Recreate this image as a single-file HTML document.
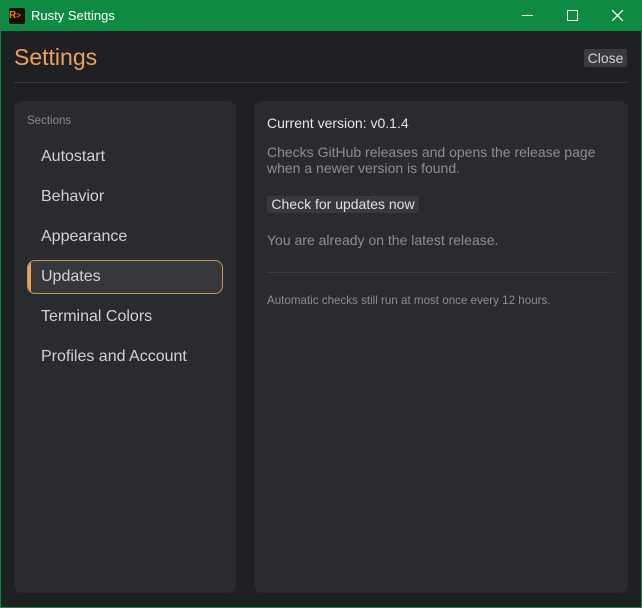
<html><head><style>
body{margin:0;width:642px;height:608px;background:#0f8a43;font-family:"Liberation Sans","DejaVu Sans",sans-serif;overflow:hidden;position:relative}
.t{position:absolute;white-space:nowrap}
#win{position:absolute;left:1px;top:31px;width:640px;height:576px;background:#1f2024}
.panel{position:absolute;background:#2a2b2f;border-radius:8px;top:101px;height:492px}
.nav{position:absolute;left:41px;font-size:16px;color:#d2d2d2}
</style></head><body>
<div class="t" style="left:9px;top:8px;width:16px;height:16px;background:#1a0e08;border-radius:2px;color:#f07a20;font-size:10px;font-weight:bold;line-height:16px">R<span style="font-size:8px">&gt;</span></div>
<div class="t" style="left:31px;top:8px;font-size:13px;color:#fff">Rusty Settings</div>
<div class="t" style="left:522px;top:15px;width:11px;height:1px;background:#fff"></div>
<div class="t" style="left:567px;top:10px;width:9px;height:9px;border:1px solid #fff"></div>
<svg class="t" style="left:612px;top:10px" width="11" height="11"><path d="M0 0L11 11M11 0L0 11" stroke="#fff" stroke-width="1.2"/></svg>
<div id="win"></div>
<div class="t" style="left:14px;top:44px;font-size:23px;color:#e8a262">Settings</div>
<div class="t" style="left:584px;top:49px;width:43px;height:18px;background:#3a3b3f;border-radius:2px;color:#d0d0d0;font-size:14px;line-height:18px;text-align:center">Close</div>
<div class="t" style="left:14px;top:82px;width:614px;height:1px;background:#38393d"></div>
<div class="panel" style="left:14px;width:222px"></div>
<div class="panel" style="left:254px;width:374px"></div>
<div class="t" style="left:27px;top:115px;font-size:11.5px;color:#8a8a8e">Sections</div>
<div class="nav" style="top:148px">Autostart</div>
<div class="nav" style="top:188px">Behavior</div>
<div class="nav" style="top:228px">Appearance</div>
<div class="t" style="left:27px;top:260px;width:194px;height:32px;border:1px solid #c8915a;border-radius:8px;background:#36373b;overflow:hidden"><div style="width:3px;height:100%;background:#f0a050"></div></div>
<div class="nav" style="top:268px">Updates</div>
<div class="nav" style="top:308px">Terminal Colors</div>
<div class="nav" style="top:348px">Profiles and Account</div>
<div class="t" style="left:267px;top:115px;font-size:14px;color:#e6e6e6">Current version: v0.1.4</div>
<div class="t" style="left:267px;top:144px;font-size:14px;color:#8e8e92;line-height:16px">Checks GitHub releases and opens the release page<br>when a newer version is found.</div>
<div class="t" style="left:267px;top:196px;width:152px;height:17px;background:#38393d;border-radius:2px;font-size:14px;color:#e0e0e0;line-height:17px;text-align:center">Check for updates now</div>
<div class="t" style="left:267px;top:232px;font-size:14px;color:#8e8e92">You are already on the latest release.</div>
<div class="t" style="left:267px;top:272px;width:348px;height:1px;background:#3a3b3f"></div>
<div class="t" style="left:267px;top:294px;font-size:11.6px;color:#8e8e92">Automatic checks still run at most once every 12 hours.</div>
</body></html>
